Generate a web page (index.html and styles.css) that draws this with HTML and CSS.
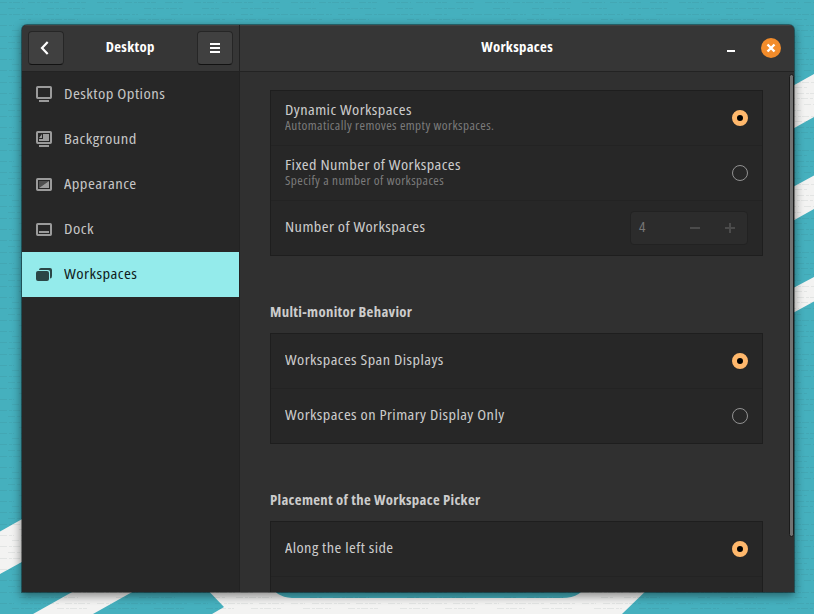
FILE: index.html
```
<!DOCTYPE html>
<html lang="en">
<head>
<meta charset="utf-8">
<title>Workspaces</title>
<link rel="stylesheet" href="styles.css">
</head>
<body>
<svg class="wallpaper" width="814" height="614" viewBox="0 0 814 614" aria-hidden="true">
  <defs>
    <pattern id="weave" width="97" height="34" patternUnits="userSpaceOnUse">
      <path d="M0 2.5h23m5 0h31m9 0h18M8 8.5h17m22 0h38M0 14.5h41m6 0h12m15 0h23M19 19.5h13m10 0h36M0 25.5h14m7 0h39m5 0h25M12 30.5h28m17 0h30" stroke="#243f3f" stroke-opacity=".08" stroke-dasharray="7 2 3 1"/>
    </pattern>
  </defs>
  <rect width="814" height="614" fill="#45b0be"/>
  <g fill="#f3f3f2">
    <path d="M780 93L814 74V117L780 136ZM780 194L814 175.500V209L780 228ZM780 295L814 277V301.500L780 320Z"/>
    <path d="M0 531.500L40 509V552L0 574ZM33 614L90 582H150L93 614Z"/>
    <path d="M200 582L224 607L212 614H622L655 582H586Q583 598 562 598H292Q275 597 268 582Z"/>
  </g>
  <rect width="814" height="614" fill="url(#weave)"/>
</svg>
<div class="window">
  <aside class="sidebar">
    <header class="bar side-bar">
      <button class="btn" aria-label="Back"><svg width="16" height="16" viewBox="0 0 16 16"><path d="M9.700 2L4 8L9.700 14" fill="none" stroke="#fff" stroke-width="2.200"/></svg></button>
      <h1 class="title">Desktop</h1>
      <button class="btn" aria-label="Menu"><svg width="16" height="16" viewBox="0 0 16 16"><path d="M3 4h10M3 8h10M3 12h10" stroke="#fff" stroke-width="2"/></svg></button>
    </header>
    <nav>
      <a class="item"><svg width="16" height="16" viewBox="0 0 16 16"><rect x="1" y="1" width="14" height="11" rx=".7" fill="none" stroke="currentColor" stroke-width="2"/><path d="M3 15h10" stroke="currentColor" stroke-width="2"/></svg><span>Desktop Options</span></a>
      <a class="item"><svg width="16" height="16" viewBox="0 0 16 16"><rect x="1" y="1" width="14" height="11" rx=".7" fill="none" stroke="currentColor" stroke-width="2"/><path d="M7 3h6v7H3V8h4ZM3 7L6 3V7ZM3 14h10v2H3Z" fill="currentColor"/></svg><span>Background</span></a>
      <a class="item"><svg width="16" height="16" viewBox="0 0 16 16"><rect x="1" y="3" width="14" height="11" rx=".7" fill="none" stroke="currentColor" stroke-width="2"/><path d="M3 5H13L3 12Z" fill="currentColor" opacity=".35"/><path d="M13 5V12H3Z" fill="currentColor"/></svg><span>Appearance</span></a>
      <a class="item"><svg width="16" height="16" viewBox="0 0 16 16"><rect x="1" y="3" width="14" height="11" rx=".7" fill="none" stroke="currentColor" stroke-width="2"/><path d="M3 11h10" stroke="currentColor" stroke-width="2"/></svg><span>Dock</span></a>
      <a class="item active"><svg width="16" height="16" viewBox="0 0 16 16"><rect x="0" y="5" width="13" height="10" rx="2" fill="currentColor"/><path d="M3 4Q3 2 5 2H14Q16 2 16 4V10Q16 12.500 14 12.500V5.500Q14 4 12 4Z" fill="currentColor"/></svg><span>Workspaces</span></a>
    </nav>
  </aside>
  <main class="main">
    <header class="bar main-bar">
      <h1 class="title">Workspaces</h1>
      <div class="controls"><span class="minimize"></span><span class="close"><svg width="20" height="20" viewBox="0 0 20 20"><path d="M6.500 6.500L13.500 13.500M13.500 6.500L6.500 13.500" stroke="#fff" stroke-width="2.400"/></svg></span></div>
    </header>
    <div class="content">
      <section class="card">
        <div class="row"><div><p class="name">Dynamic Workspaces</p><p class="hint">Automatically removes empty workspaces.</p></div><i class="radio on"></i></div>
        <div class="row"><div><p class="name">Fixed Number of Workspaces</p><p class="hint">Specify a number of workspaces</p></div><i class="radio"></i></div>
        <div class="row"><p class="name">Number of Workspaces</p>
          <div class="spin"><span class="num">4</span><svg width="16" height="16" viewBox="0 0 16 16"><path d="M3 8h10" stroke="#4b4b4b" stroke-width="2"/></svg><svg width="16" height="16" viewBox="0 0 16 16"><path d="M3 8h10M8 3v10" stroke="#4b4b4b" stroke-width="2"/></svg></div></div>
      </section>
      <h2>Multi-monitor Behavior</h2>
      <section class="card">
        <div class="row"><p class="name">Workspaces Span Displays</p><i class="radio on"></i></div>
        <div class="row"><p class="name">Workspaces on Primary Display Only</p><i class="radio"></i></div>
      </section>
      <h2>Placement of the Workspace Picker</h2>
      <section class="card">
        <div class="row"><p class="name">Along the left side</p><i class="radio on"></i></div>
        <div class="row"></div>
      </section>
    </div>
    <div class="scrollbar"></div>
  </main>
</div>
</body>
</html>
```
FILE: styles.css
```
* { box-sizing: border-box; margin: 0; padding: 0; }
body { width: 814px; height: 614px; overflow: hidden; padding: 25px 20px 22px 22px; font: 15px/19px "Open Sans", "Noto Sans", sans-serif; font-stretch: 75%; letter-spacing: .4px; color: #ccc; }
svg { display: block; flex: none; }
.wallpaper { position: absolute; inset: 0; z-index: -1; }
.window { display: flex; width: 772px; height: 567px; border-radius: 5px 5px 0 0; background: #303030; overflow: hidden; box-shadow: 0 0 0 1px rgba(0,0,0,.38), 0 3px 10px 1px rgba(0,0,0,.45); }
.sidebar { width: 218px; flex: none; background: #272727; border-right: 1px solid #222; }
.bar { height: 47px; display: flex; align-items: center; background: #363636; border-bottom: 1px solid #232323; box-shadow: inset 0 1px #434343; }
.side-bar { padding: 0 6px; justify-content: space-between; }
.title, h2 { font-size: 14px; line-height: 19px; font-weight: 700; letter-spacing: .3px; transform: scaleX(1.055); }
.title { color: #fff; padding-bottom: 3px; }
.btn { width: 36px; height: 34px; display: grid; place-items: center; background: #404040; border: 1px solid #262626; border-bottom-color: #121212; border-radius: 4px; }
.item { height: 45px; display: flex; align-items: center; gap: 12px; padding-left: 14px; color: #9b9b9b; }
.item svg { margin-bottom: 1px; }
.item span { color: #c5c5c5; padding-bottom: 2px; transform: scaleX(1.11); transform-origin: 0 0; }
.item.active { background: #94ebeb; color: #2b4646; }
.item.active span { color: #101c1c; }
.main { flex: 1; position: relative; min-width: 0; }
.main-bar { display: grid; grid-template-columns: 1fr; align-items: center; }
.main-bar .title, .controls { grid-area: 1 / 1; }
.main-bar .title { justify-self: center; }
.controls { display: flex; justify-self: end; align-items: center; gap: 26px; padding-right: 13px; }
.minimize { width: 8px; height: 2px; background: #fff; margin-top: 6px; }
.close { width: 20px; height: 20px; border-radius: 50%; background: #f28c2b; }
.content { height: 520px; overflow: hidden; padding: 18px 31px 0 30px; }
.card { background: #272727; border: 1px solid #1e1e1e; }
.row { height: 55px; display: flex; align-items: center; justify-content: space-between; padding: 0 14px; border-bottom: 1px solid #232323; }
.row:last-child { border-bottom: 0; height: 54px; }
.name { white-space: nowrap; transform: scaleX(1.09); transform-origin: 0 0; }
.row > .name { padding-bottom: 4px; }
.row > div:first-child .name { line-height: 17px; }
.row > div:first-child { padding-bottom: 2px; }
.hint { font-size: 12px; line-height: 15px; color: #7c7c7c; white-space: nowrap; transform: scaleX(1.1); transform-origin: 0 0; }
.radio { width: 16px; height: 16px; border-radius: 50%; border: 1px solid #929292; }
.radio.on { border: 5px solid #ffb86c; background: #000; }
h2 { color: #ccc; margin: 46px 0 12px; transform-origin: 0 0; }
.spin { width: 118px; height: 34px; background: #2c2c2c; border: 1px solid #222; border-radius: 4px; display: flex; align-items: center; padding: 0 9px 0 8px; gap: 19px; }
.num { color: #777; flex: 1; padding-bottom: 3px; }
.scrollbar { position: absolute; right: 0; top: 49px; width: 5px; height: 463px; border: 1px solid #1b1b1b; border-radius: 3px; background: #727272; }
```
